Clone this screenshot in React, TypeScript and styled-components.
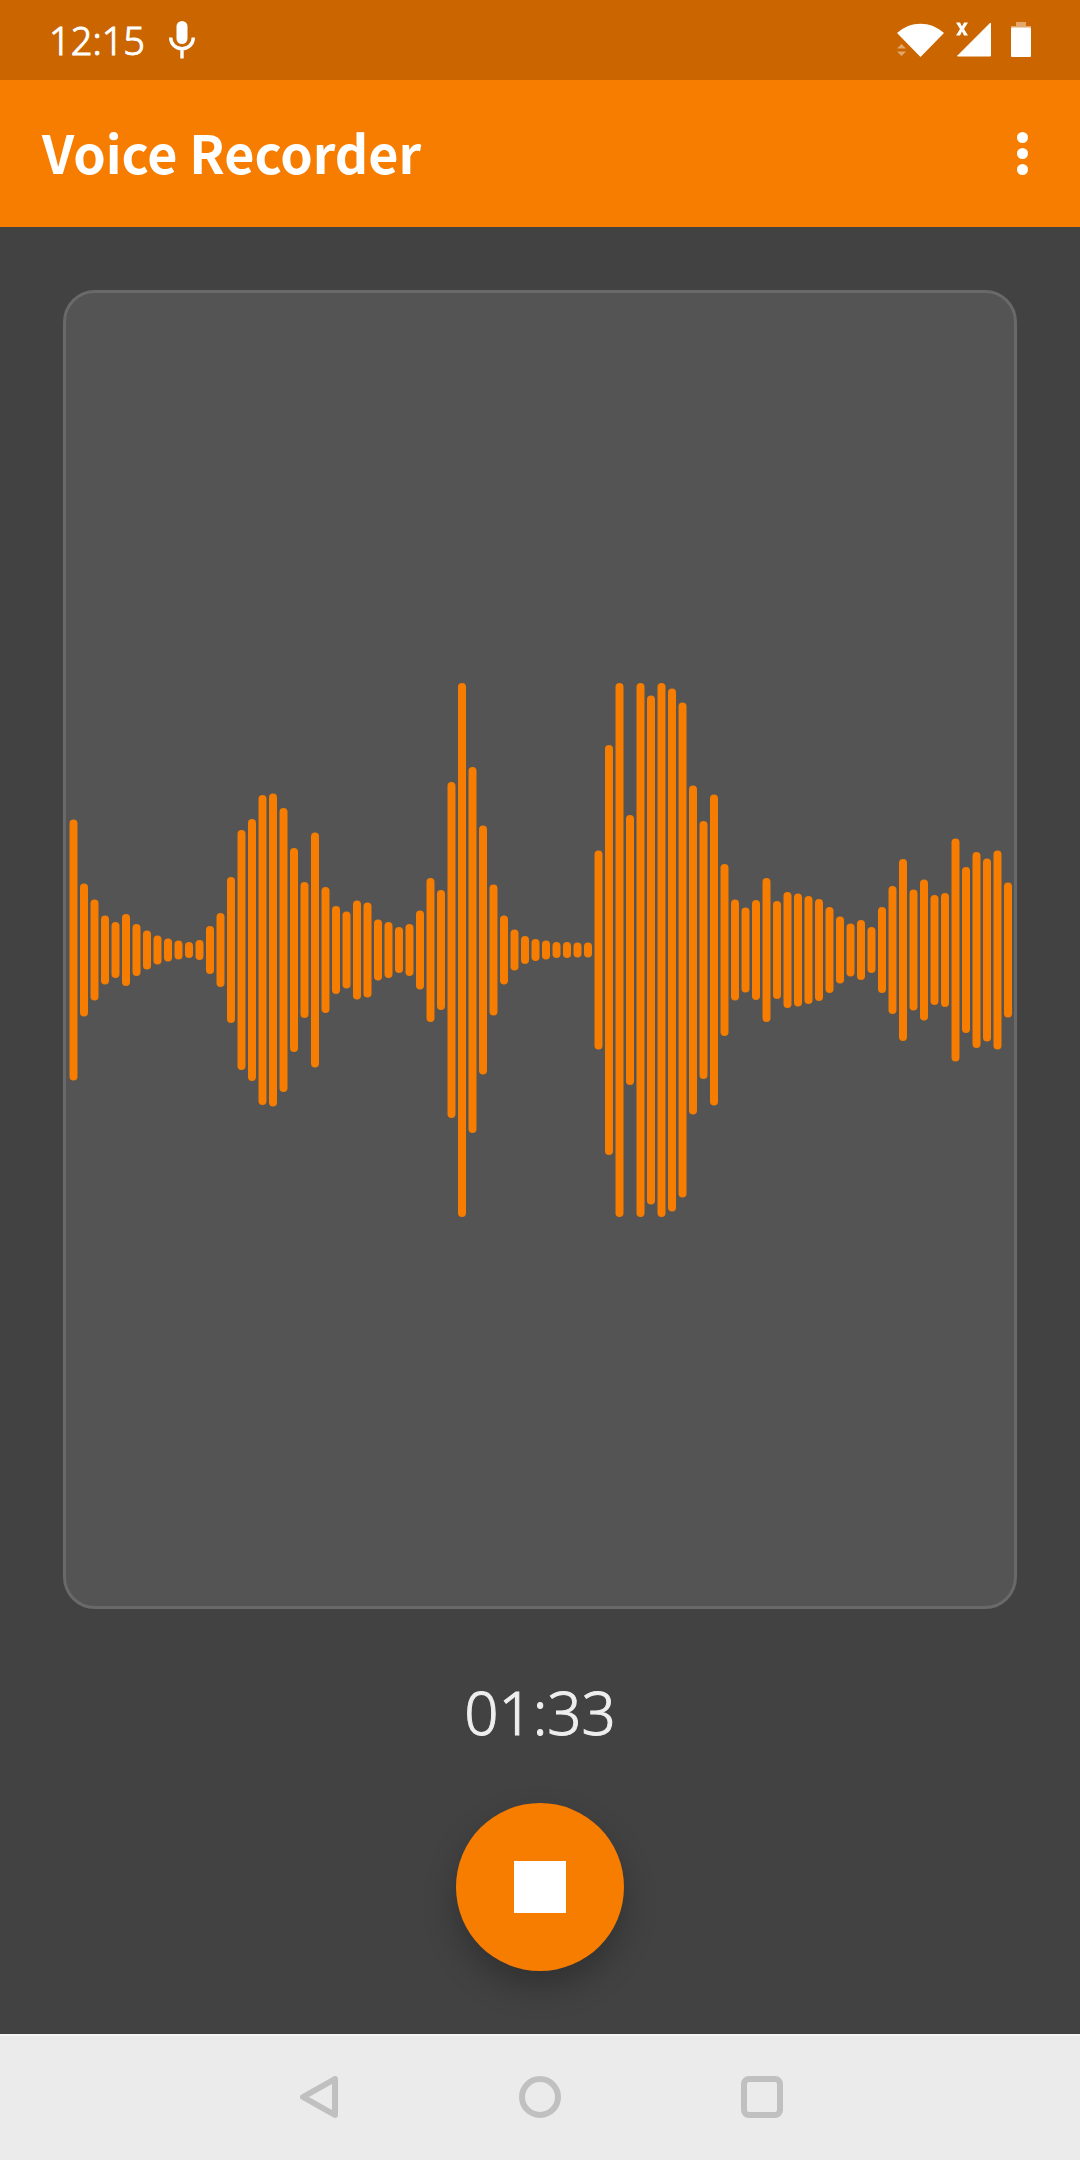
import React from "react";
import styled, { createGlobalStyle } from "styled-components";

const orange = "#f67d00";
const orangeDark = "#ca6500";

const GlobalStyle = createGlobalStyle`
  *, *::before, *::after { box-sizing: border-box; }
  body { margin: 0; background: #424242; }
  button { border: 0; padding: 0; background: none; color: inherit; font: inherit; cursor: pointer; }
  svg { display: block; }
`;

const Screen = styled.div`
  display: flex;
  flex-direction: column;
  min-height: 100vh;
  background: #424242;
  color: #fff;
  font-family: "Noto Sans", "Open Sans", sans-serif;
`;

const StatusBar = styled.div`
  display: flex;
  align-items: center;
  justify-content: space-between;
  height: 80px;
  padding: 0 48px 0 49px;
  background: ${orangeDark};
`;

const StatusGroup = styled.div<{ $gap: number }>`
  display: flex;
  align-items: center;
  gap: ${(p) => p.$gap}px;
`;

const Clock = styled.time`
  font-size: 38px;
  font-weight: 300;
  line-height: 48px;
  -webkit-text-stroke: 1px currentColor;
`;

const AppBar = styled.header`
  display: flex;
  align-items: center;
  justify-content: space-between;
  height: 147px;
  padding: 0 32px 0 42px;
  background: ${orange};
`;

const Title = styled.h1`
  margin: 0;
  padding-bottom: 4px;
  font-family: "Noto Sans CJK JP", "Noto Sans", sans-serif;
  font-size: 52px;
  font-weight: 700;
  line-height: 76px;
`;

const MenuButton = styled.button`
  display: flex;
  flex-direction: column;
  align-items: center;
  justify-content: center;
  gap: 5px;
  width: 52px;
  height: 84px;
`;

const Dot = styled.span`
  width: 11px;
  height: 11px;
  border-radius: 50%;
  background: #fff;
`;

const Main = styled.main`
  display: flex;
  flex: 1;
  flex-direction: column;
  align-items: center;
  padding: 63px;
`;

const WaveCard = styled.section`
  display: flex;
  flex: 1;
  align-items: center;
  width: 100%;
  border: 3px solid #696969;
  border-radius: 32px;
  background: #545454;
`;

const Wave = styled.svg`
  width: 100%;
  height: auto;
`;

const Timer = styled.time`
  margin: 62px 0 50px;
  color: #eeeeee;
  font-size: 60px;
  font-weight: 300;
  line-height: 82px;
  -webkit-text-stroke: 1px currentColor;
`;

const StopButton = styled.button`
  display: flex;
  align-items: center;
  justify-content: center;
  width: 168px;
  height: 168px;
  border-radius: 50%;
  background: ${orange};
  box-shadow: 0 16px 32px rgba(0, 0, 0, 0.26);
`;

const StopMark = styled.span`
  width: 52px;
  height: 52px;
  background: #fff;
`;

const NavBar = styled.nav`
  display: flex;
  align-items: center;
  justify-content: center;
  gap: 138px;
  height: 126px;
  background: #ebebeb;
  box-shadow: inset 0 2px #f4f4f4;
`;

const NavButton = styled.button`
  display: flex;
  align-items: center;
  justify-content: center;
  width: 84px;
  height: 84px;
`;

const NavIcon = styled.svg`
  width: 42px;
  height: 42px;
  fill: none;
  stroke: #c0c0c0;
  stroke-width: 6;
  stroke-linejoin: round;
`;

const levels = [
  261, 133, 101, 69, 56, 72, 52, 39, 29, 23, 19, 16, 20, 48, 74, 146, 240, 262,
  310, 313, 284, 204, 136, 235, 126, 88, 77, 99, 95, 61, 56, 46, 52, 79, 144,
  120, 336, 534, 366, 249, 131, 69, 41, 28, 22, 19, 16, 16, 15, 15, 199, 410,
  534, 270, 534, 509, 534, 523, 495, 329, 258, 311, 172, 101, 85, 100, 144, 98,
  116, 113, 108, 102, 86, 67, 53, 60, 46, 86, 128, 182, 121, 141, 110, 114,
  223, 166, 196, 183, 199, 135,
];

function Waveform() {
  return (
    <Wave viewBox="0 0 948 534" role="img" aria-label="Recording level">
      {levels.map((level, i) => (
        <rect
          key={i}
          x={3.5 + i * 10.5}
          y={267 - level / 2}
          width={8}
          height={level}
          rx={4}
          fill={orange}
        />
      ))}
    </Wave>
  );
}

export default function App() {
  return (
    <Screen>
      <GlobalStyle />
      <StatusBar>
        <StatusGroup $gap={24}>
          <Clock>12:15</Clock>
          <svg width="26" height="38" viewBox="0 0 26 38" aria-hidden="true">
            <rect x="7.5" y="0" width="11" height="23" rx="5.5" fill="#fff" />
            <path
              d="M1.7 16.5C1.7 23 6.500 27.700 13 27.700S24.300 23 24.300 16.500M13 27.700V37.500"
              fill="none"
              stroke="#fff"
              strokeWidth="3.4"
            />
          </svg>
        </StatusGroup>
        <StatusGroup $gap={12}>
          <svg width="47" height="36" viewBox="0 0 47 36" aria-hidden="true">
            <path d="M0 11C13.500 -1.500 33.500 -1.500 47 11L23.500 35Z" fill="#fff" />
            <path d="M0 26.500L4.500 22L9 26.500ZM0 29.500H9L4.500 34Z" fill="#e2a76b" />
          </svg>
          <svg width="36" height="36" viewBox="0 0 36 36" aria-hidden="true">
            <path d="M34.500 1V34H1.500Z" fill="#fff" stroke="#fff" strokeLinejoin="round" />
            <path
              d="M0 0.500H4L6 4.500L8 0.500H12L8 7L12 13.500H8L6 9.500L4 13.500H0L4 7Z"
              fill="#fff"
            />
          </svg>
          <svg width="28" height="36" viewBox="0 0 28 36" aria-hidden="true">
            <path d="M12 0H22V4H27V6H7V4H12Z" fill="#e2a76b" />
            <rect x="7" y="5.5" width="20" height="29.5" rx="1" fill="#fff" />
          </svg>
        </StatusGroup>
      </StatusBar>
      <AppBar>
        <Title>Voice Recorder</Title>
        <MenuButton type="button" aria-label="More options">
          <Dot />
          <Dot />
          <Dot />
        </MenuButton>
      </AppBar>
      <Main>
        <WaveCard>
          <Waveform />
        </WaveCard>
        <Timer>01:33</Timer>
        <StopButton type="button" aria-label="Stop recording">
          <StopMark />
        </StopButton>
      </Main>
      <NavBar>
        <NavButton type="button" aria-label="Back">
          <NavIcon viewBox="0 0 42 42">
            <path d="M38 3V39L6 21Z" />
          </NavIcon>
        </NavButton>
        <NavButton type="button" aria-label="Home">
          <NavIcon viewBox="0 0 42 42">
            <circle cx="21" cy="21" r="18" />
          </NavIcon>
        </NavButton>
        <NavButton type="button" aria-label="Recent apps">
          <NavIcon viewBox="0 0 42 42">
            <rect x="3" y="3" width="36" height="36" rx="5" />
          </NavIcon>
        </NavButton>
      </NavBar>
    </Screen>
  );
}
